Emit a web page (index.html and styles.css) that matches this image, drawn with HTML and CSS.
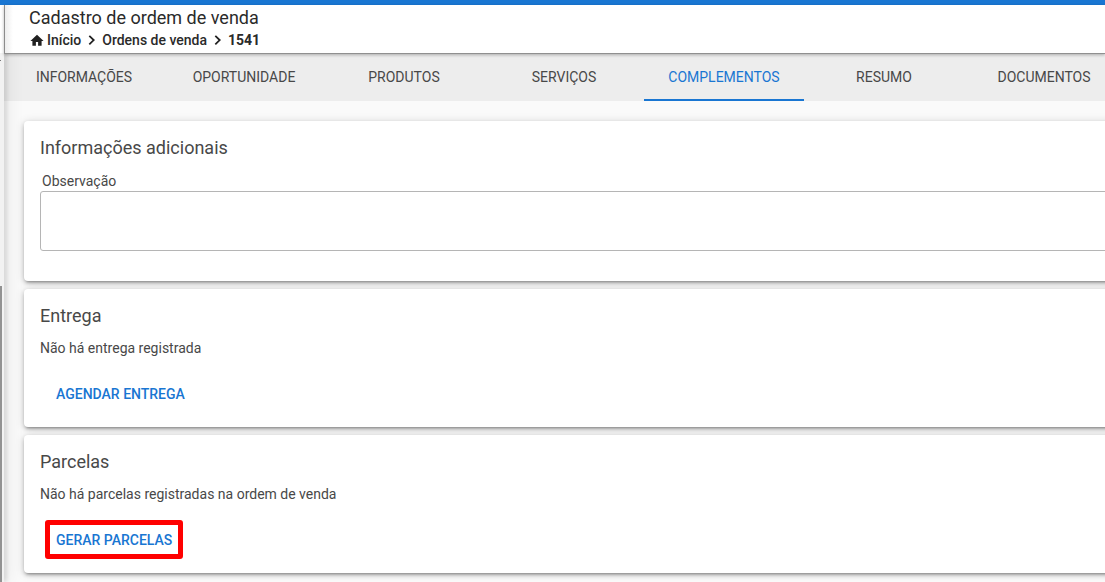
FILE: index.html
```html
<!DOCTYPE html>
<html lang="pt-BR">
<head>
  <meta charset="UTF-8" />
  <meta name="viewport" content="width=device-width, initial-scale=1.0" />
  <title>Cadastro de ordem de venda</title>
  <link rel="stylesheet" href="styles.css">
</head>
<body>
  <div class="topbar"></div>
  <div class="layout">
    <aside class="sidebar">
      <div class="sidebar-head"></div>
      <div class="sidebar-mark"></div>
      <div class="sidebar-scroll"></div>
    </aside>

    <main class="content">
      <header class="page-header">
        <h1>Cadastro de ordem de venda</h1>
        <nav class="breadcrumb">
          <svg class="home" viewBox="0 0 14 12" width="14" height="12"><path d="M7 0.7L0.4 6.9h2V11.7h3.5V8h2.2v3.7h3.5V6.9h2z" fill="#212121"/></svg>
          <a>Início</a>
          <svg class="chevron" viewBox="0 0 8 10" width="8" height="10"><path d="M1.3 0.9l4.4 4.2-4.4 4.2" fill="none" stroke="#212121" stroke-width="1.8"/></svg>
          <a>Ordens de venda</a>
          <svg class="chevron" viewBox="0 0 8 10" width="8" height="10"><path d="M1.3 0.9l4.4 4.2-4.4 4.2" fill="none" stroke="#212121" stroke-width="1.8"/></svg>
          <a class="current">1541</a>
        </nav>
      </header>

      <nav class="tabs">
        <a class="tab">Informações</a>
        <a class="tab">Oportunidade</a>
        <a class="tab">Produtos</a>
        <a class="tab">Serviços</a>
        <a class="tab active">Complementos</a>
        <a class="tab">Resumo</a>
        <a class="tab">Documentos</a>
      </nav>

      <div class="cards">
        <section class="card card-info">
          <h2>Informações adicionais</h2>
          <label for="observacao">Observação</label>
          <textarea id="observacao" name="observacao"></textarea>
        </section>

        <section class="card">
          <h2>Entrega</h2>
          <p>Não há entrega registrada</p>
          <button type="button">Agendar entrega</button>
        </section>

        <section class="card">
          <h2>Parcelas</h2>
          <p>Não há parcelas registradas na ordem de venda</p>
          <button type="button" class="highlight">Gerar parcelas</button>
        </section>
      </div>
    </main>
  </div>
</body>
</html>
```
FILE: styles.css
```css
* {
  box-sizing: border-box;
  font-family: Roboto, sans-serif;
  margin: 0;
  padding: 0;
}
body {
  height: 582px;
  background: #fafafa;
  color: #484848;
  overflow: hidden;
}
.topbar {
  height: 5px;
  background: #1976d2;
}
.layout {
  display: flex;
  height: 577px;
}
.sidebar {
  position: relative;
  z-index: 2;
  display: flex;
  flex-direction: column;
  width: 4px;
  flex-shrink: 0;
  background: #f2f2f2;
  box-shadow: 2px 0 5px rgba(0, 0, 0, 0.18), 4px 0 16px rgba(0, 0, 0, 0.14);
  clip-path: inset(0 -30px 0 0);
}
.sidebar-head {
  height: 48px;
  background: #fff;
}
.sidebar-mark {
  width: 1px;
  height: 1px;
  margin-top: 7px;
  background: #777;
}
.sidebar-scroll {
  width: 2px;
  flex: 1;
  margin-top: 225px;
  background: #929292;
}
.content {
  flex: 1;
  min-width: 0;
}
.page-header {
  position: relative;
  z-index: 3;
  height: 49px;
  padding: 3px 0 0 25px;
  background: linear-gradient(to right, #ededed, #fff 8px);
  border-left: 1px solid #8c8c8c;
  border-bottom: 1px solid #909090;
  box-shadow: 0 1px 3px rgba(0, 0, 0, 0.28);
  color: #2a2a2a;
}
h1 {
  margin-left: -1px;
  font-size: 18px;
  font-weight: 400;
  line-height: 20px;
}
.breadcrumb {
  display: flex;
  align-items: center;
  height: 20px;
  margin-top: 2px;
  font-size: 14px;
  font-weight: 500;
}
.home {
  margin-right: 3px;
}
.chevron {
  margin: 0 6px 0 7px;
}
.current {
  font-weight: 700;
}
.tabs {
  display: flex;
  height: 47px;
  background: #ededed;
}
.tab {
  flex: 0 0 160px;
  height: 47px;
  font-size: 14px;
  line-height: 46px;
  text-align: center;
  text-transform: uppercase;
}
.tab.active {
  color: #1976d2;
  border-bottom: 2px solid #1976d2;
}
.cards {
  display: flex;
  flex-direction: column;
  gap: 8px;
  padding: 20px 0 0 20px;
}
.card {
  width: 1100px;
  height: 138px;
  padding: 16px;
  background: #fff;
  border-radius: 4px;
  box-shadow: 0 3px 3px -2px rgba(0, 0, 0, 0.3), 0 2px 4px rgba(0, 0, 0, 0.2), 0 1px 10px rgba(0, 0, 0, 0.14);
}
.card-info {
  height: 160px;
}
h2 {
  font-size: 18px;
  font-weight: 400;
  line-height: 21px;
}
label {
  display: block;
  margin: 15px 0 0 2px;
  font-size: 14px;
  line-height: 16px;
}
textarea {
  display: block;
  width: 1068px;
  height: 60px;
  margin-top: 2px;
  border: 1px solid #b5b5b5;
  border-radius: 3px;
  resize: none;
}
.card p {
  margin-top: 14px;
  font-size: 14px;
  line-height: 16px;
}
button {
  display: block;
  height: 39px;
  margin: 18px 0 0 5px;
  padding: 1px 6px 0;
  border: 5px solid transparent;
  border-radius: 3px;
  background: none;
  color: #1976d2;
  font-size: 14px;
  font-weight: 500;
  text-transform: uppercase;
}
.highlight {
  border-color: #f00;
}
```
